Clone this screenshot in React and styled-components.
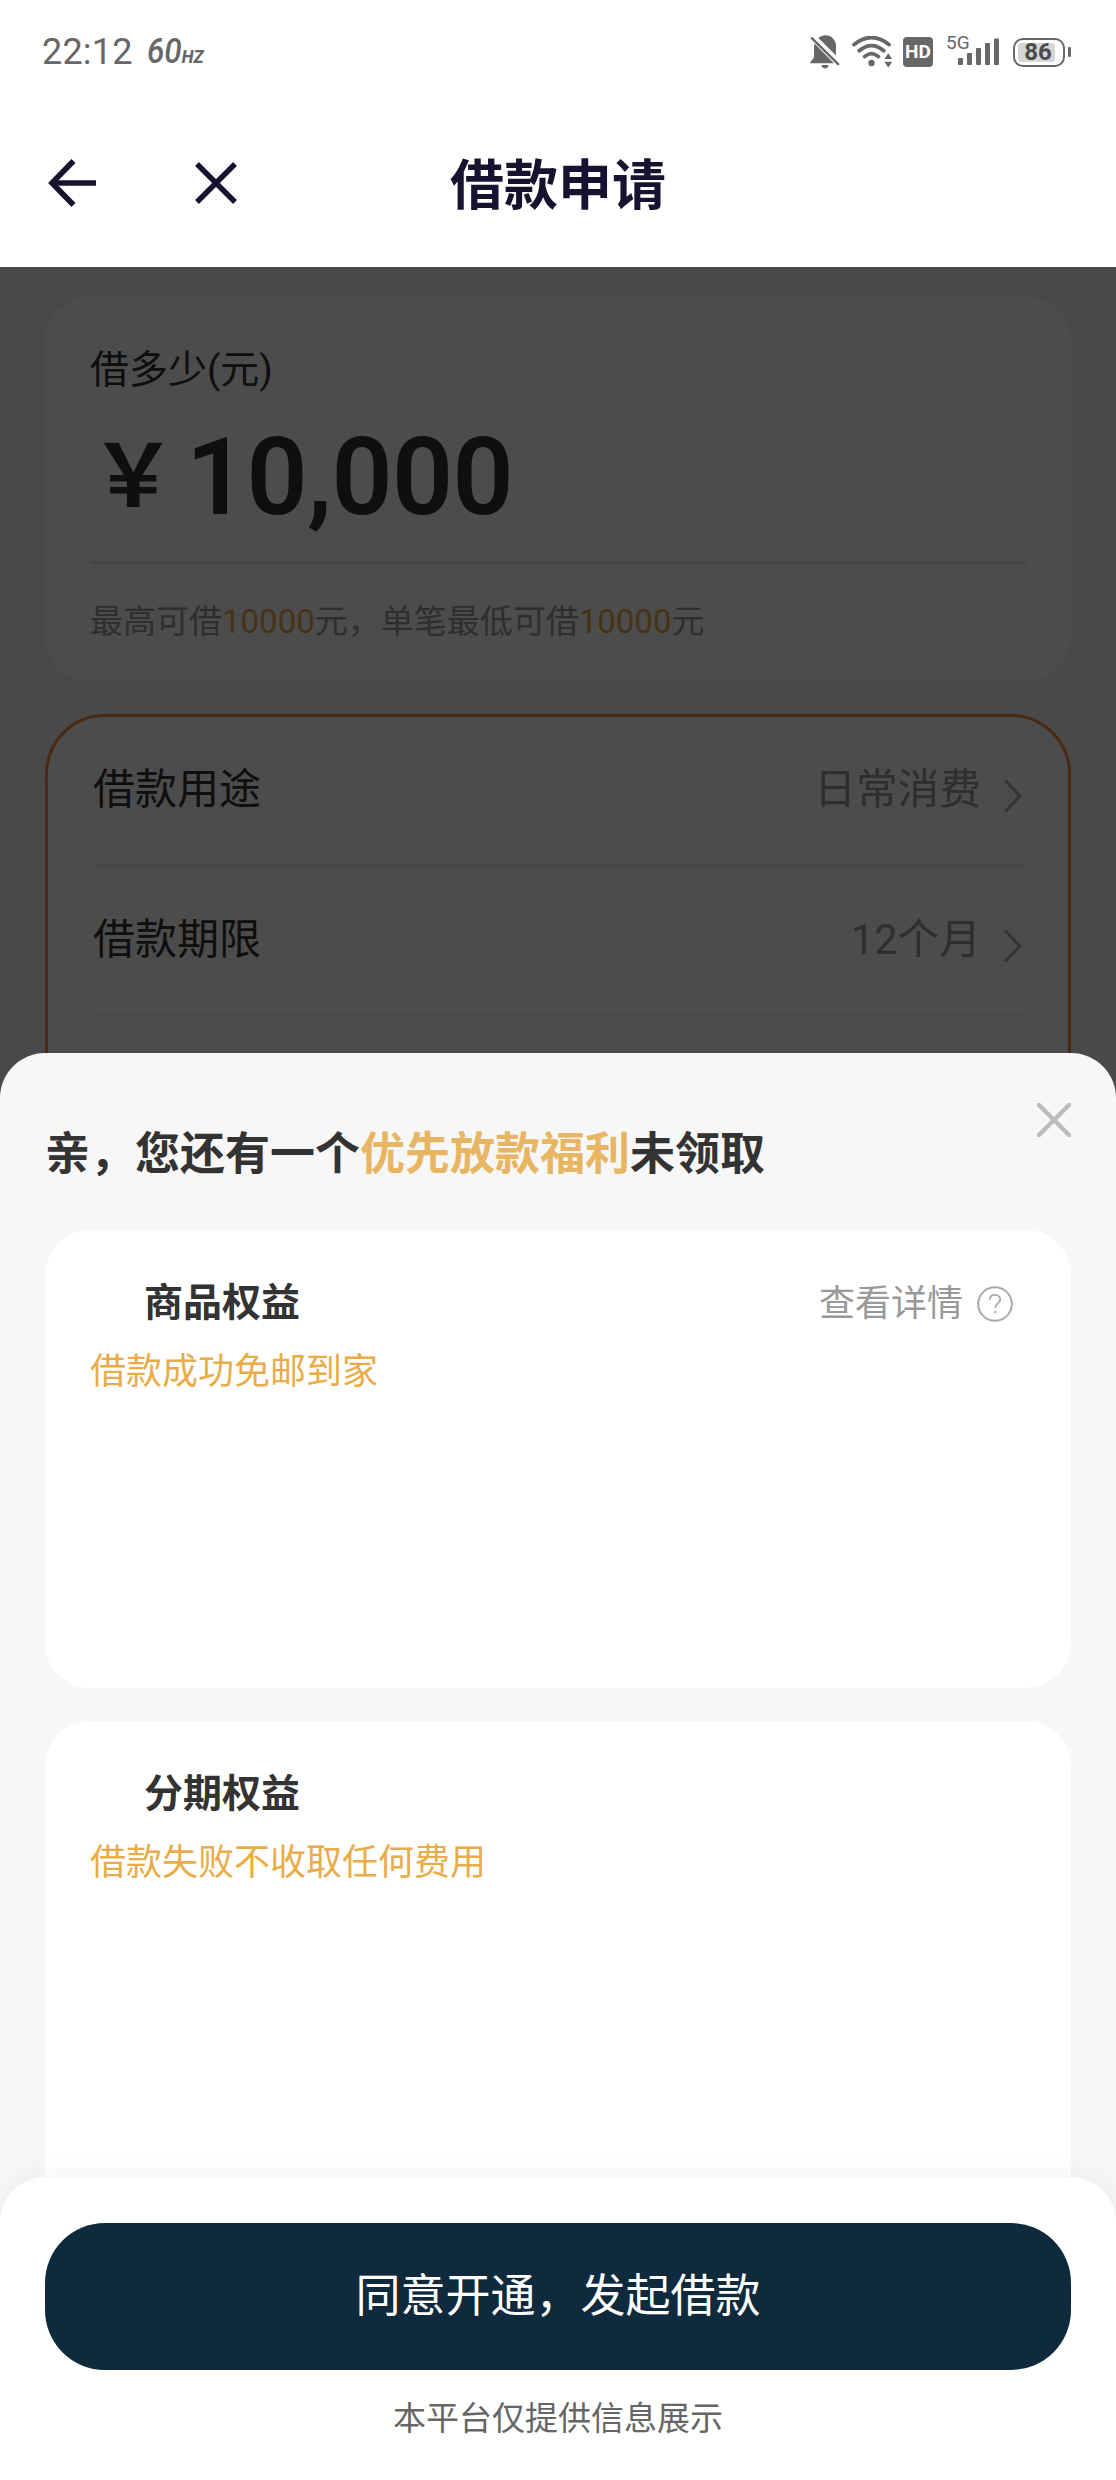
import styled, { createGlobalStyle } from 'styled-components';

const formRows = [
  { label: '借款用途', value: '日常消费' },
  { label: '借款期限', value: '12个月' },
];

const benefits = [
  { title: '商品权益', desc: '借款成功免邮到家', detail: '查看详情' },
  { title: '分期权益', desc: '借款失败不收取任何费用' },
];

const BellOffIcon = () => (
  <svg width="30" height="34" viewBox="0 0 30 34" fill="#676767">
    <path d="M8.4 3C10.6 1.2 12.6 0.2 15.5 0.2C21.5 0.2 26 5 26 11V20.4L8.4 3Z" />
    <path d="M4.5 8.6L24 28.2H0.4V27L4 22.5V13C4 11.4 4.1 10 4.5 8.6Z" />
    <path d="M1.8 3.2L28.2 29.2" stroke="#676767" strokeWidth="2.4" strokeLinecap="round" />
    <path d="M11.4 30H18.6C18.2 32.3 17 33.6 15 33.6S11.8 32.3 11.4 30Z" />
  </svg>
);

const WifiIcon = () => (
  <svg width="42" height="32" viewBox="0 0 42 32" fill="none">
    <g stroke="#676767" strokeWidth="3.8" strokeLinecap="round">
      <path d="M2 8.6C13 -0.8 26 -0.8 37 8.6" />
      <path d="M7.2 14.8C15 8 24 8 31.8 14.8" />
      <path d="M12.6 20.6C17 16.8 22 16.8 26.4 20.6" />
    </g>
    <circle cx="19.5" cy="27" r="3.2" fill="#676767" />
    <path d="M36.3 17.2L40.2 23H32.4Z" fill="#676767" />
    <path d="M36.3 31.6L40.2 25.8H32.4Z" fill="#676767" />
  </svg>
);

const SignalIcon = () => (
  <svg width="41" height="28" viewBox="0 0 41 28" fill="#676767">
    <rect x="0" y="20" width="5" height="7" rx="1" />
    <rect x="9" y="15" width="5" height="12" rx="1" />
    <rect x="18" y="10" width="5" height="17" rx="1" />
    <rect x="27" y="5" width="5" height="22" rx="1" />
    <rect x="36" y="0.5" width="5" height="26.5" rx="1" />
  </svg>
);

const BackIcon = () => (
  <svg width="48" height="48" viewBox="0 0 48 48" fill="none" stroke="#15132f" strokeWidth="5.6">
    <path d="M25.5 2L4 24L25.5 46" />
    <path d="M4 24H48" />
  </svg>
);

const CloseIcon = () => (
  <svg width="42" height="42" viewBox="0 0 42 42" fill="none" stroke="#15132f" strokeWidth="5.4">
    <path d="M2 2L40 40M40 2L2 40" />
  </svg>
);

const ChevronIcon = () => (
  <svg width="18" height="34" viewBox="0 0 18 34" fill="none" stroke="#aaa" strokeWidth="3">
    <path d="M1 1.5L16 17L1 32.5" />
  </svg>
);

const SheetCloseIcon = () => (
  <svg width="34" height="34" viewBox="0 0 34 34" fill="none" stroke="#bbb" strokeWidth="4.4" strokeLinecap="round">
    <path d="M2 2L32 32M32 2L2 32" />
  </svg>
);

const HelpIcon = () => (
  <svg width="36" height="36" viewBox="0 0 36 36" fill="none" stroke="#aaa">
    <circle cx="18" cy="18" r="16.8" strokeWidth="2" />
    <path d="M12.6 13.8C12.8 10.4 15 8.8 18 8.8C21.2 8.8 23.2 10.8 23.2 13.4C23.2 17 18.2 17.4 18.2 22.2" strokeWidth="1.8" />
    <circle cx="18.2" cy="26" r="1.3" fill="#aaa" stroke="none" />
  </svg>
);

const App = () => {
  return (
    <>
      <GlobalStyle />
      <Screen>
        <StatusBar>
          <Time>22:12</Time>
          <RefreshRate>
            60<small>HZ</small>
          </RefreshRate>
          <StatusIcons>
            <BellOffIcon />
            <WifiIcon />
            <HdBadge>HD</HdBadge>
            <Signal>
              <Network>5G</Network>
              <SignalIcon />
            </Signal>
            <Battery>
              <BatteryLevel>86</BatteryLevel>
            </Battery>
          </StatusIcons>
        </StatusBar>

        <NavBar>
          <BackIcon />
          <CloseIcon />
          <NavTitle>借款申请</NavTitle>
        </NavBar>

        <Content>
          <AmountCard>
            <AmountLabel>借多少(元)</AmountLabel>
            <Amount>
              <Currency>￥</Currency>
              10,000
            </Amount>
            <AmountHint>
              最高可借<em>10000</em>元，单笔最低可借<em>10000</em>元
            </AmountHint>
          </AmountCard>
          <FormCard>
            {formRows.map((row) => (
              <FormRow key={row.label}>
                <FormLabel>{row.label}</FormLabel>
                <FormValue>
                  {row.value}
                  <ChevronIcon />
                </FormValue>
              </FormRow>
            ))}
          </FormCard>

          <Mask />
          <Sheet>
            <SheetHeader>
              <SheetTitle>
                亲，您还有一个<em>优先放款福利</em>未领取
              </SheetTitle>
              <SheetCloseIcon />
            </SheetHeader>
            <BenefitList>
              {benefits.map((item) => (
                <BenefitCard key={item.title}>
                  <BenefitHead>
                    <BenefitTitle>{item.title}</BenefitTitle>
                    {item.detail && (
                      <Detail>
                        {item.detail}
                        <HelpIcon />
                      </Detail>
                    )}
                  </BenefitHead>
                  <BenefitDesc>{item.desc}</BenefitDesc>
                </BenefitCard>
              ))}
            </BenefitList>
            <SheetFooter>
              <SubmitButton>同意开通，发起借款</SubmitButton>
              <Notice>本平台仅提供信息展示</Notice>
            </SheetFooter>
          </Sheet>
        </Content>
      </Screen>
    </>
  );
};

const GlobalStyle = createGlobalStyle`
  * {
    box-sizing: border-box;
  }
  body {
    margin: 0;
    background-color: #fff;
    font-family: Roboto, 'Noto Sans CJK SC', sans-serif;
    color: #333;
  }
  em {
    font-style: normal;
  }
  svg {
    display: block;
    flex-shrink: 0;
  }
`;

const Screen = styled.div`
  display: flex;
  flex-direction: column;
  width: 1116px;
  height: 2480px;
  overflow: hidden;
  background-color: #fff;
`;

const StatusBar = styled.div`
  display: flex;
  align-items: center;
  height: 102px;
  padding: 2px 51px 0 42px;
  color: #676767;
`;

const Time = styled.span`
  font-size: 36px;
  line-height: 40px;
  letter-spacing: 0.2px;
`;

const RefreshRate = styled.span`
  margin-left: 14px;
  padding-top: 4px;
  font-size: 35px;
  line-height: 40px;
  font-style: italic;
  font-weight: 500;
  transform: scaleX(0.9);
  transform-origin: left;
  small {
    font-size: 19px;
    font-weight: 800;
  }
`;

const StatusIcons = styled.div`
  display: flex;
  align-items: center;
  margin-left: auto;
  svg + svg {
    margin-left: 12px;
  }
`;

const HdBadge = styled.span`
  width: 30px;
  height: 30px;
  margin: 0 13px 0 9px;
  border-radius: 4px;
  background-color: #676767;
  color: #fff;
  font-size: 19px;
  line-height: 30px;
  font-weight: 700;
  text-align: center;
`;

const Signal = styled.div`
  display: flex;
  align-items: flex-end;
  margin-right: 14px;
`;

const Network = styled.span`
  width: 12px;
  font-size: 19px;
  line-height: 18px;
  align-self: flex-start;
  margin-top: -4px;
`;

const Battery = styled.div`
  display: flex;
  width: 52px;
  height: 29px;
  padding: 3px;
  border: 2.5px solid #676767;
  border-radius: 10px;
  position: relative;
  &::after {
    content: '';
    position: absolute;
    top: 7px;
    right: -8px;
    width: 3px;
    height: 10px;
    border-radius: 1px;
    background-color: #676767;
  }
`;

const BatteryLevel = styled.span`
  width: 37px;
  border-radius: 3px;
  background-color: #d6d6d6;
  color: #4c4c4c;
  font-size: 24px;
  line-height: 18px;
  font-weight: 700;
  text-align: center;
  text-indent: 3px;
`;

const NavBar = styled.div`
  display: flex;
  align-items: center;
  gap: 99px;
  height: 165px;
  padding: 0 48px 3px;
`;

const NavTitle = styled.h1`
  margin: 7px 0 0 114px;
  color: #15132f;
  font-size: 54px;
  line-height: 60px;
`;

const Content = styled.div`
  position: relative;
  flex: 1;
  padding: 30px 45px 0;
  background-color: #f6f6f6;
`;

const AmountCard = styled.div`
  height: 384px;
  padding: 45px 45px 0;
  border-radius: 45px;
  background-color: #fff;
`;

const AmountLabel = styled.div`
  font-size: 39px;
  line-height: 56px;
`;

const Amount = styled.div`
  display: flex;
  align-items: center;
  height: 166px;
  padding-bottom: 3px;
  border-bottom: 3px solid #e4e4e4;
  font-size: 107px;
  line-height: 120px;
  font-weight: 600;
  letter-spacing: -0.6px;
`;

const Currency = styled.span`
  margin-right: 10px;
  font-size: 86.5px;
  font-weight: 700;
`;

const AmountHint = styled.div`
  margin-top: 34px;
  font-size: 33px;
  line-height: 48px;
  color: #999;
  em {
    color: #e9ac49;
  }
`;

const FormCard = styled.div`
  height: 500px;
  margin-top: 33px;
  padding: 0 44px;
  border: 3px solid #f28c44;
  border-radius: 60px;
  background-color: #fff;
  box-shadow: 0 0 30px rgba(0, 0, 0, 0.04);
`;

const FormRow = styled.div`
  display: flex;
  justify-content: space-between;
  height: 150px;
  padding-top: 43px;
  border-bottom: 3px solid #f0f0f0;
  line-height: 60px;
`;

const FormLabel = styled.span`
  padding-left: 1px;
  font-size: 42px;
`;

const FormValue = styled.span`
  display: flex;
  gap: 23px;
  padding-right: 2px;
  color: #999;
  font-size: 41.7px;
  svg {
    margin-top: 19px;
  }
`;

const Mask = styled.div`
  position: absolute;
  inset: 0;
  background-color: rgba(0, 0, 0, 0.7);
`;

const Sheet = styled.div`
  position: absolute;
  inset: 786px 0 0;
  display: flex;
  flex-direction: column;
  overflow: hidden;
  border-radius: 45px 45px 0 0;
  background-color: #f7f7f7;
`;

const SheetHeader = styled.div`
  display: flex;
  justify-content: space-between;
  height: 177px;
  padding: 50px 45px 0;
`;

const SheetTitle = styled.h2`
  margin: 20px 0 0;
  font-size: 45px;
  line-height: 64px;
  em {
    color: #e8b562;
  }
`;

const BenefitList = styled.div`
  flex: 1;
  display: flex;
  flex-direction: column;
  gap: 33px;
  min-height: 0;
  padding: 0 45px;
  overflow: hidden;
`;

const BenefitCard = styled.div`
  flex: 0 0 458px;
  padding: 45px 45px;
  border-radius: 45px;
  background-color: #fff;
  &:last-child {
    flex-basis: 560px;
  }
`;

const BenefitHead = styled.div`
  display: flex;
  align-items: center;
  justify-content: space-between;
  height: 56px;
  padding: 0 13px 0 54px;
`;

const BenefitTitle = styled.h3`
  margin: 0;
  font-size: 39px;
  line-height: 56px;
`;

const Detail = styled.span`
  display: flex;
  align-items: center;
  gap: 14px;
  padding-top: 1px;
  color: #999;
  font-size: 36px;
  line-height: 56px;
`;

const BenefitDesc = styled.div`
  margin-top: 15px;
  color: #e9ac49;
  font-size: 36px;
  line-height: 52px;
`;

const SheetFooter = styled.div`
  position: relative;
  height: 303px;
  margin-top: -45px;
  padding: 46px 45px 0;
  border-radius: 45px 45px 0 0;
  background-color: #fff;
  box-shadow: 0 0 30px rgba(0, 0, 0, 0.06);
`;

const SubmitButton = styled.button`
  display: block;
  width: 100%;
  height: 147px;
  padding-top: 2px;
  border: none;
  border-radius: 60px;
  background-color: #0e2a3c;
  color: #fff;
  font-family: inherit;
  font-size: 45px;
  line-height: 64px;
`;

const Notice = styled.div`
  margin-top: 25px;
  color: #666;
  font-size: 33px;
  line-height: 48px;
  text-align: center;
`;

export default App;
